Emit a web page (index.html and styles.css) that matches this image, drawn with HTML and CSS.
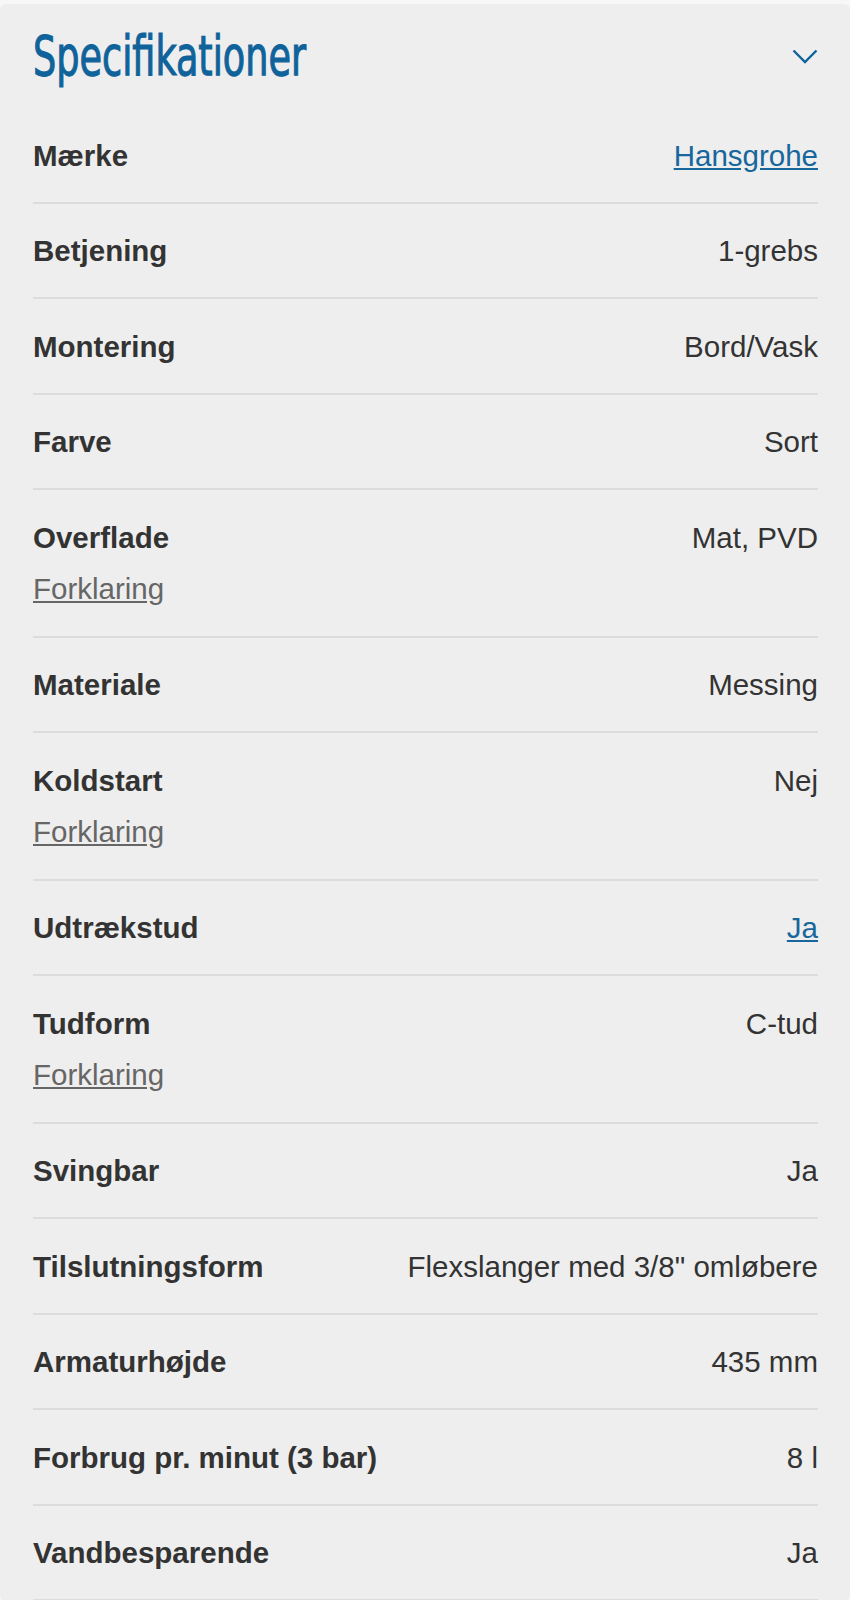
FILE: index.html
```html
<!DOCTYPE html>
<html lang="da">

<head>
    <meta charset="UTF-8">
    <meta name="viewport" content="width=device-width, initial-scale=1.0">
    <title>Specifikationer</title>

    <link rel="stylesheet" href="styles.css">
</head>

<body>
    <section class="specs">
        <div class="specs-header">
            <h2>Specifikationer</h2>
            <svg class="chevron" width="26" height="15" viewBox="0 0 26 15">
                <polyline points="1.5,1.5 13,13 24.5,1.5" fill="none" stroke="#10639a" stroke-width="2.4" />
            </svg>
        </div>

        <dl class="spec-list">
            <div class="spec-row">
                <dt>Mærke</dt>
                <dd><a href="#" class="value-link">Hansgrohe</a></dd>
            </div>
            <div class="spec-row">
                <dt>Betjening</dt>
                <dd>1-grebs</dd>
            </div>
            <div class="spec-row">
                <dt>Montering</dt>
                <dd>Bord/Vask</dd>
            </div>
            <div class="spec-row">
                <dt>Farve</dt>
                <dd>Sort</dd>
            </div>
            <div class="spec-row">
                <dt>Overflade<a href="#" class="explain">Forklaring</a></dt>
                <dd>Mat, PVD</dd>
            </div>
            <div class="spec-row">
                <dt>Materiale</dt>
                <dd>Messing</dd>
            </div>
            <div class="spec-row">
                <dt>Koldstart<a href="#" class="explain">Forklaring</a></dt>
                <dd>Nej</dd>
            </div>
            <div class="spec-row">
                <dt>Udtrækstud</dt>
                <dd><a href="#" class="value-link">Ja</a></dd>
            </div>
            <div class="spec-row">
                <dt>Tudform<a href="#" class="explain">Forklaring</a></dt>
                <dd>C-tud</dd>
            </div>
            <div class="spec-row">
                <dt>Svingbar</dt>
                <dd>Ja</dd>
            </div>
            <div class="spec-row">
                <dt>Tilslutningsform</dt>
                <dd>Flexslanger med 3/8" omløbere</dd>
            </div>
            <div class="spec-row">
                <dt>Armaturhøjde</dt>
                <dd>435 mm</dd>
            </div>
            <div class="spec-row">
                <dt>Forbrug pr. minut (3 bar)</dt>
                <dd>8 l</dd>
            </div>
            <div class="spec-row">
                <dt>Vandbesparende</dt>
                <dd>Ja</dd>
            </div>
        </dl>
    </section>
</body>

</html>
```

FILE: styles.css
```css
html {
    height: 100%;
}

body {
    margin: 0;
    padding: 4px 0 0;
    background: #f7f7f7;
    font-family: "Liberation Sans", Arial, sans-serif;
    color: #333;
}

.specs {
    background: #eeeeee;
    border-radius: 6px;
    padding: 0 32px 0 33px;
    overflow: hidden;
}

.specs-header {
    display: flex;
    justify-content: space-between;
    align-items: center;
    padding: 20px 0;
}

/* condensed display face: no Oswald offline, so squeeze DejaVu */
.specs-header h2 {
    margin: 0;
    font-family: "DejaVu Sans", sans-serif;
    font-stretch: condensed;
    font-weight: normal;
    font-size: 55px;
    line-height: 64px;
    color: #10639a;
    -webkit-text-stroke: 1.1px #10639a;
    transform: scaleX(0.74);
    transform-origin: left center;
    white-space: nowrap;
}

.chevron {
    display: block;
}

.spec-list {
    margin: 0;
}

.spec-row {
    display: flex;
    justify-content: space-between;
    align-items: flex-start;
    gap: 20px;
    padding: 30.5px 0 29px;
    border-bottom: 2px solid #dcdcdc;
    font-size: 29.5px;
    line-height: 34px;
}

.spec-row dt {
    display: flex;
    flex-direction: column;
    align-items: flex-start;
    font-weight: bold;
}

.spec-row dd {
    margin: 0;
    text-align: right;
}

.explain {
    margin-top: 15px;
    line-height: 37px;
    font-weight: normal;
    color: #666;
    text-decoration: underline;
}

.value-link {
    color: #17669c;
    text-decoration: underline;
}
```
